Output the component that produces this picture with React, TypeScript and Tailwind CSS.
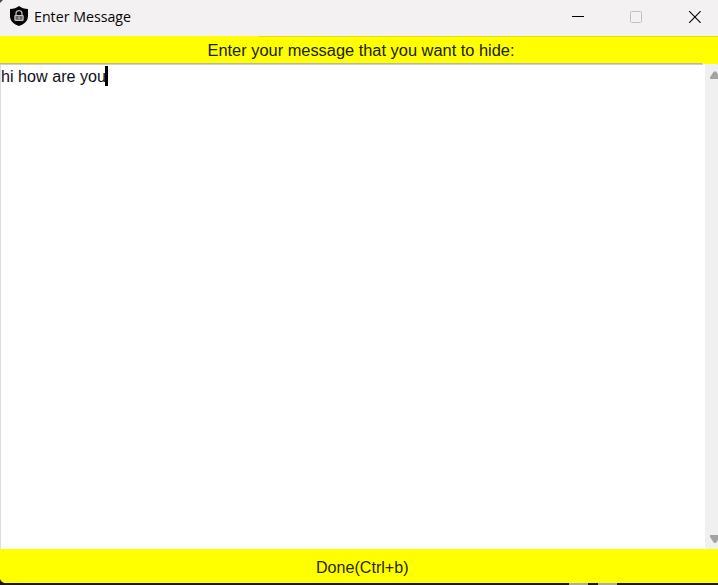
function ShieldIcon() {
  return (
    <svg width="20" height="22" viewBox="0 0 20 22" className="-mt-[4px] shrink-0">
      <path d="M10 1 C7.500 3 4.500 3.800 1 4 V11 C1 16 5 19.500 10 21 C15 19.500 19 16 19 11 V4 C15.500 3.800 12.500 3 10 1 Z" fill="#050507" />
      <path d="M7 10.500 V8.700 a3 3 0 0 1 6 0 V10.500" fill="none" stroke="#b4b4b6" strokeWidth="1.300" />
      <rect x="5.900" y="10.500" width="8.200" height="4.800" rx="0.500" fill="#68686c" stroke="#c4c4c6" strokeWidth="1.200" />
      <path d="M10 11.500 V14" stroke="#cfcfcf" strokeWidth="1" />
    </svg>
  );
}

function TitleBar() {
  return (
    <header className="flex h-9 shrink-0 items-center bg-[#f3f1f2] pl-[9px] pr-[17px]">
      <ShieldIcon />
      <svg width="98" height="36" className="ml-[5px] shrink-0 overflow-visible">
        <text x="0" y="22" textLength="97" lengthAdjust="spacingAndGlyphs" fill="#050505" fontSize="15" fontFamily="'Open Sans', 'Noto Sans', sans-serif">Enter Message</text>
      </svg>
      <div className="-mt-[2px] ml-auto flex items-center gap-[46px]">
        <svg width="12" height="12" shapeRendering="crispEdges"><path d="M0 5.500 H12" stroke="#000" /></svg>
        <svg width="12" height="12"><rect x="0.500" y="0.500" width="11" height="11" rx="1" fill="none" stroke="#c2c0c1" /></svg>
        <svg width="13" height="12"><path d="M1.200 0.200 L12.600 11.800 M12.600 0.200 L1.200 11.800" stroke="#000" strokeWidth="1.150" /></svg>
      </div>
    </header>
  );
}

function Scrollbar() {
  return (
    <div className="flex w-[13px] shrink-0 flex-col items-end justify-between overflow-hidden bg-[#f0f0f0] pb-[5px] pt-[7px]">
      <svg width="8" height="8"><path d="M0 8 V6.200 L3.500 1 Q5 -0.500 6.500 1 L10 6 V8 Z" fill="#a3a3a3" /></svg>
      <svg width="8" height="9"><path d="M0 0 V2 L3.500 7.200 Q5 8.700 6.500 7.200 L10 2 V0 Z" fill="#a3a3a3" /></svg>
    </div>
  );
}

export default function App() {
  return (
    <div className="relative flex h-[585px] w-[718px] flex-col overflow-hidden bg-white font-['Liberation_Sans',Arial,sans-serif] text-[#171700]">
      <TitleBar />
      <div className="relative h-7 shrink-0 bg-[#ffff00]">
        <div className="absolute right-0 top-0 h-px w-[459px] bg-[#e2e000]" />
        <svg width="718" height="28" className="block">
          <text x="207.500" y="20" textLength="307" lengthAdjust="spacingAndGlyphs" fontSize="16" fill="#202000">Enter your message that you want to hide:</text>
        </svg>
        <div className="absolute bottom-0 left-0 h-px w-[702px] bg-[#b9b7a0]" />
      </div>
      <main className="flex h-[485px] shrink-0">
        <div className="relative flex-1 border-l border-[#dedede] bg-white">
          <div className="absolute -left-px top-0 h-px w-[703px] bg-[#cfcfcf]" />
          <div className="flex items-start pt-[2px]">
            <svg width="104" height="20" className="shrink-0 overflow-visible">
              <text x="0" y="16" textLength="105" lengthAdjust="spacingAndGlyphs" fontSize="16" fill="#101020">hi how are you</text>
            </svg>
            <div className="h-5 w-[3px] bg-black" />
          </div>
        </div>
        <Scrollbar />
      </main>
      <footer className="h-[34px] shrink-0 bg-[#ffff00]">
        <svg width="718" height="34" className="block">
          <text x="316" y="24" textLength="92.500" lengthAdjust="spacingAndGlyphs" fontSize="16" fill="#292900">Done(Ctrl+b)</text>
        </svg>
      </footer>
      <div className="relative h-[2px] shrink-0 bg-[#191918]">
        <div className="absolute left-[569px] top-0 h-[2px] w-[19px] bg-[#aaaaa8]" />
        <div className="absolute left-[598px] top-0 h-[2px] w-[19px] bg-[#aaaaa8]" />
      </div>
      <svg width="8" height="6" className="absolute bottom-0 left-0"><path d="M0 0 Q1 4 8 5 V6 H0 Z" fill="#191918" /></svg>
      <svg width="3" height="3" className="absolute left-0 top-0"><path d="M0 0 H3 L0 3 Z" fill="#4a4a4a" /></svg>
    </div>
  );
}
